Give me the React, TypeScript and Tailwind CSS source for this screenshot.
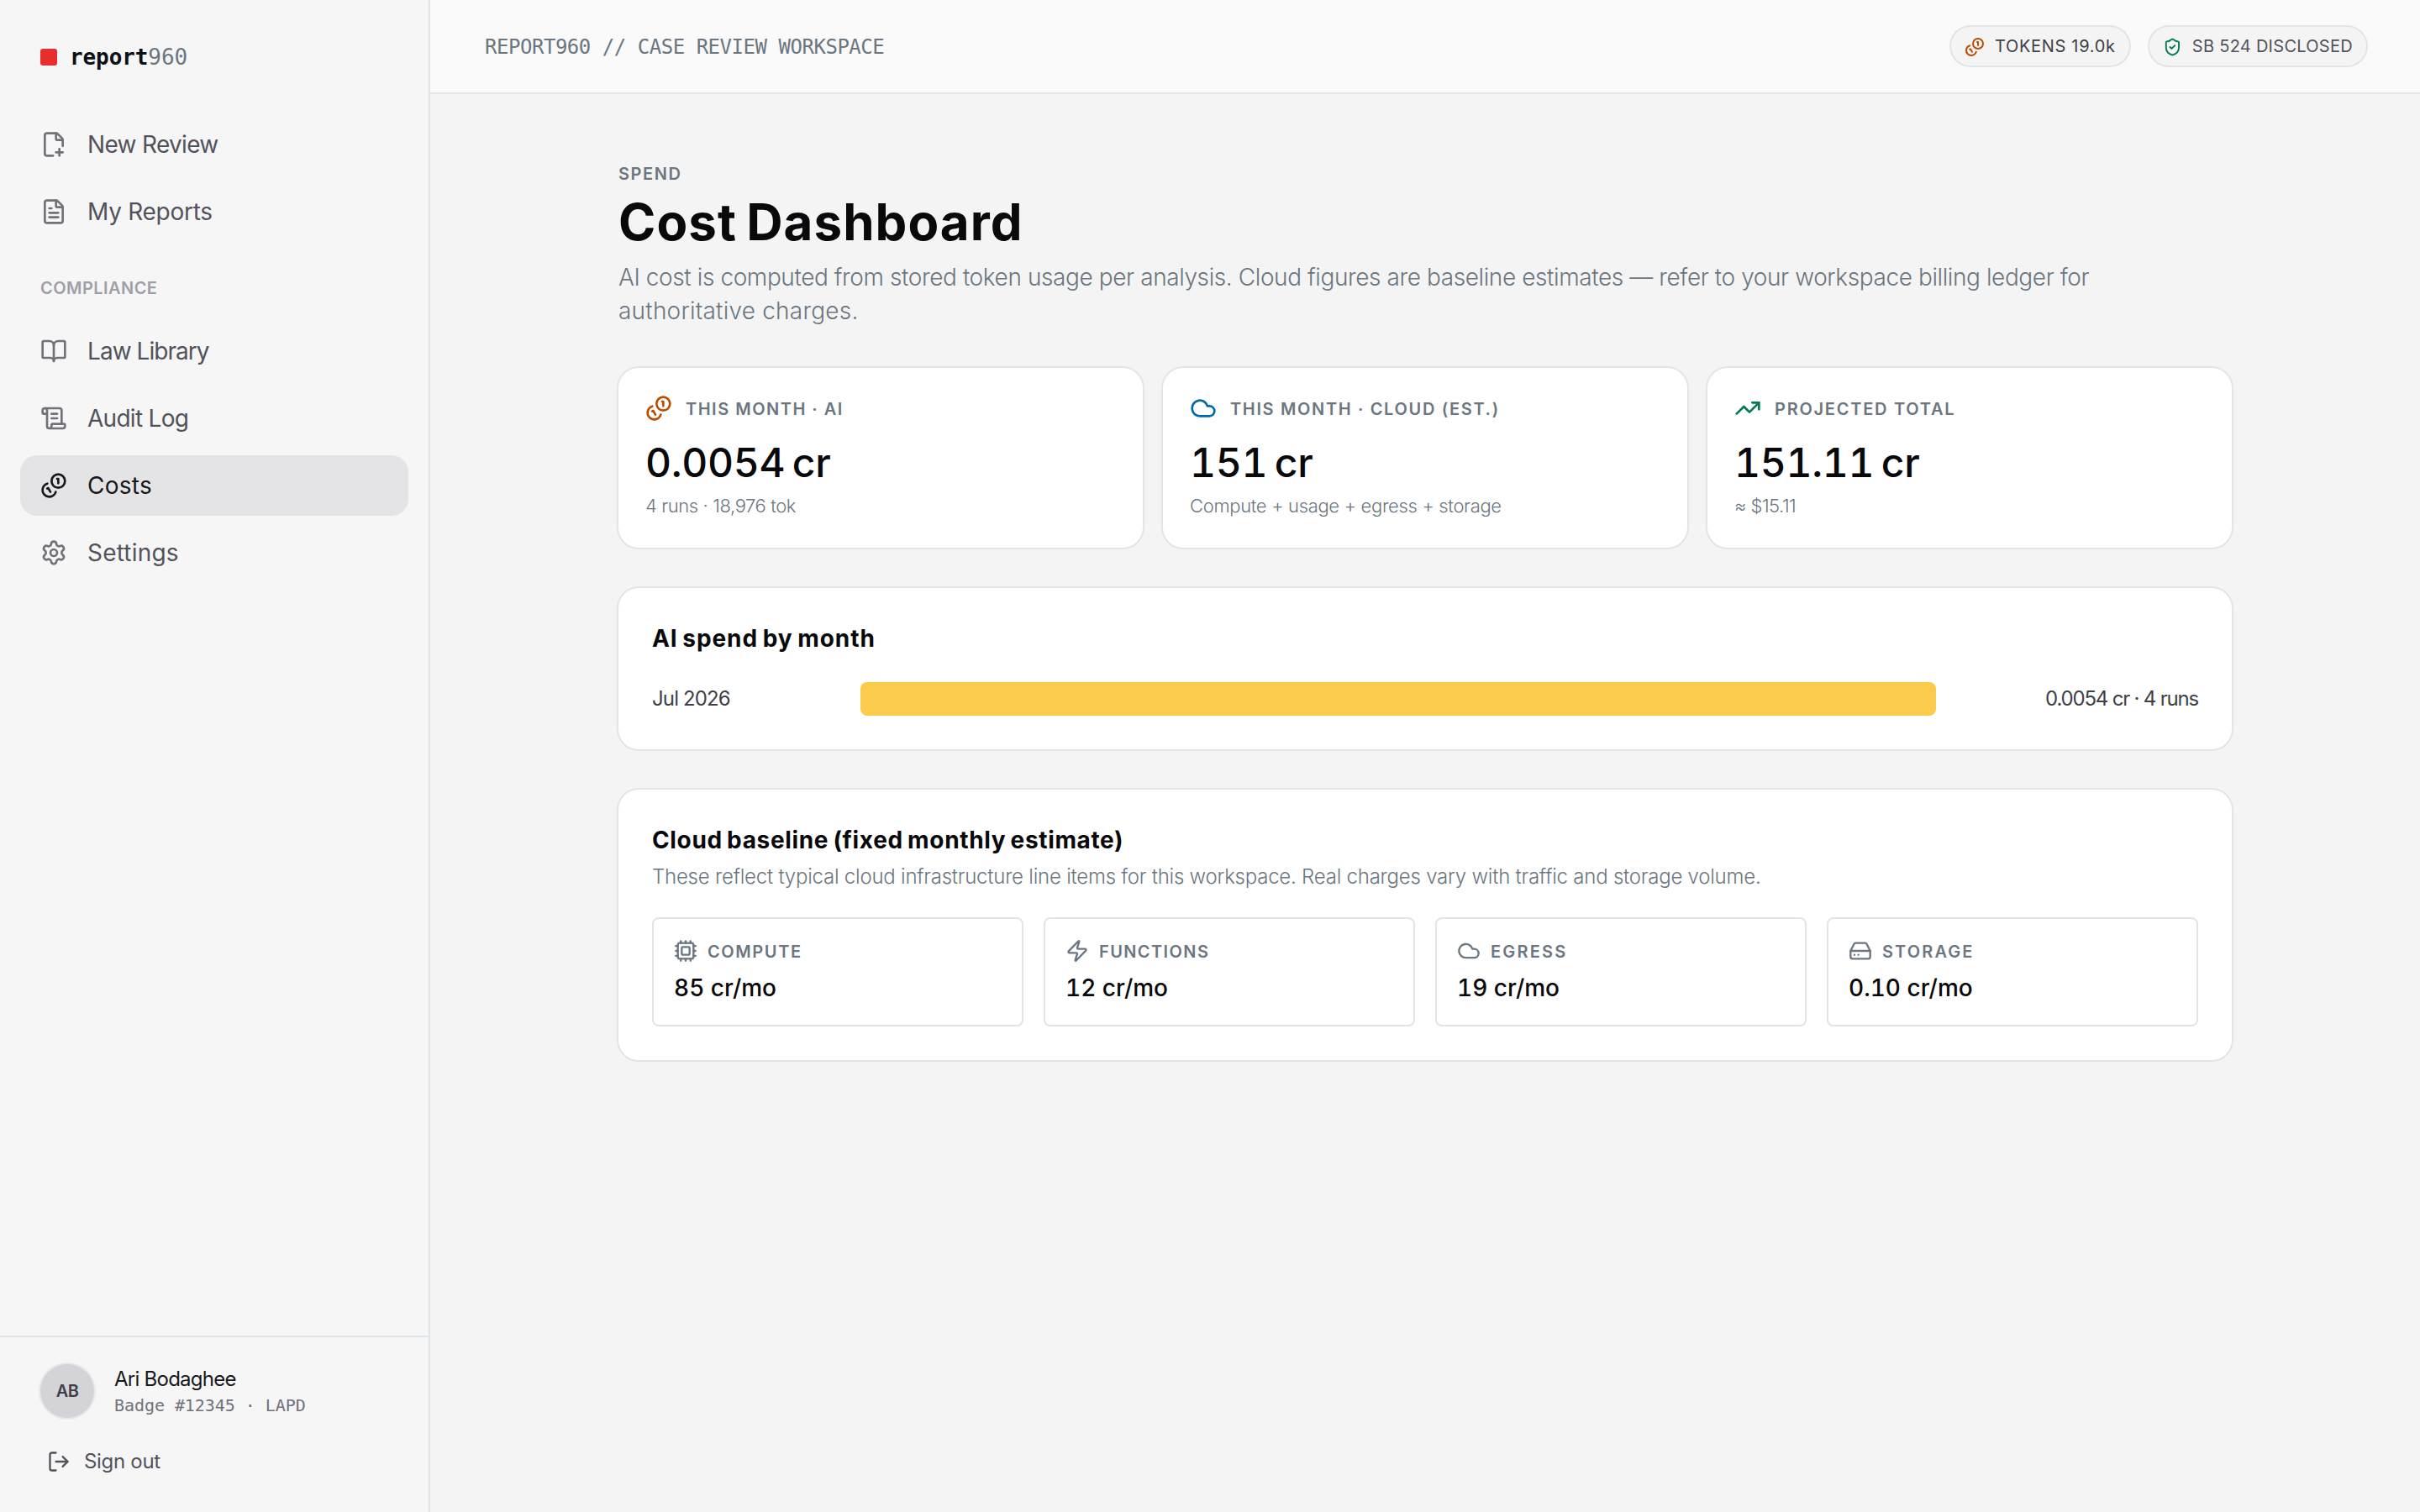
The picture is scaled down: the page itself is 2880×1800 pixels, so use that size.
import type { ComponentType } from "react";
import {
  BookOpen,
  Cloud,
  Cpu,
  FilePlusCorner,
  FileText,
  HardDrive,
  LogOut,
  ScrollText,
  Settings,
  ShieldCheck,
  TrendingUp,
  Zap,
} from "lucide-react";

type IconProps = { size?: number; className?: string };
type IconType = ComponentType<IconProps>;

function Coins({ size = 24, className }: IconProps) {
  return (
    <svg
      width={size}
      height={size}
      viewBox="0 0 24 24"
      fill="none"
      stroke="currentColor"
      strokeWidth={2}
      strokeLinecap="round"
      strokeLinejoin="round"
      className={className}
    >
      <path d="M13.744 17.736a6 6 0 1 1-7.48-7.48" />
      <path d="M15 6h1v4" />
      <path d="m6.134 14.768.866-.5 2 3.464" />
      <circle cx="16" cy="8" r="6" />
    </svg>
  );
}

type NavEntry = { label: string; icon: IconType; text: string; active?: boolean };

const mainNav: NavEntry[] = [
  { label: "New Review", icon: FilePlusCorner, text: "tracking-[-0.68px]" },
  { label: "My Reports", icon: FileText, text: "tracking-[-0.28px]" },
];

const complianceNav: NavEntry[] = [
  { label: "Law Library", icon: BookOpen, text: "tracking-[-0.95px]" },
  { label: "Audit Log", icon: ScrollText, text: "tracking-[-0.72px]" },
  { label: "Costs", icon: Coins, text: "tracking-[0.27px]", active: true },
  { label: "Settings", icon: Settings, text: "tracking-[0.2px]" },
];

const stats = [
  {
    label: "THIS MONTH · AI",
    labelText: "tracking-[1.5px]",
    value: "0.0054 cr",
    sub: "4 runs · 18,976 tok",
    subText: "tracking-[-0.4px]",
    icon: Coins,
    color: "text-amber-700",
  },
  {
    label: "THIS MONTH · CLOUD (EST.)",
    labelText: "tracking-[1.65px]",
    value: "151 cr",
    sub: "Compute + usage + egress + storage",
    subText: "tracking-[-0.33px]",
    icon: Cloud,
    color: "text-sky-700",
  },
  {
    label: "PROJECTED TOTAL",
    labelText: "tracking-[1.74px]",
    value: "151.11 cr",
    sub: "≈ $15.11",
    subText: "tracking-[-0.5px]",
    icon: TrendingUp,
    color: "text-emerald-700",
  },
];

const months = [{ month: "Jul 2026", cost: "0.0054 cr", runs: 4, share: 100 }];

const baseline = [
  { label: "COMPUTE", value: "85 cr/mo", icon: Cpu, text: "tracking-[1.6px]" },
  { label: "FUNCTIONS", value: "12 cr/mo", icon: Zap, text: "tracking-[1.4px]" },
  { label: "EGRESS", value: "19 cr/mo", icon: Cloud, text: "tracking-[2.2px]" },
  { label: "STORAGE", value: "0.10 cr/mo", icon: HardDrive, text: "tracking-[2.1px]" },
];

function NavItem({ item }: { item: NavEntry }) {
  const Icon = item.icon;
  return (
    <a
      className={
        item.active
          ? "flex h-18 items-center gap-6 rounded-[20px] bg-zinc-200 px-6 text-zinc-900"
          : "flex h-18 items-center gap-6 rounded-[20px] px-6 text-zinc-600"
      }
    >
      <Icon size={32} className={item.active ? "text-zinc-900" : "text-zinc-500"} />
      <span className={`text-[28px] ${item.text}`}>{item.label}</span>
    </a>
  );
}

function Sidebar() {
  return (
    <aside className="flex w-[512px] shrink-0 flex-col border-r-2 border-[#dfe5e9] bg-[#f6f6f6]">
      <div className="flex h-[136px] items-center gap-[15px] px-12">
        <span className="size-5 rounded-[3px] bg-[#e92c2c]" />
        <span className="font-['DejaVu_Sans_Mono',monospace] text-[26px] font-bold tracking-[-0.1px] text-[#0c1117]">
          report<span className="font-normal text-[#6b7680]">960</span>
        </span>
      </div>

      <nav className="flex flex-col gap-2 px-6">
        {mainNav.map((item) => (
          <NavItem key={item.label} item={item} />
        ))}
      </nav>
      <div className="flex h-[94px] items-center px-12 pt-4 text-[20px] font-semibold tracking-[0.45px] text-zinc-400">
        COMPLIANCE
      </div>
      <nav className="flex flex-col gap-2 px-6">
        {complianceNav.map((item) => (
          <NavItem key={item.label} item={item} />
        ))}
      </nav>

      {/* Signed-in officer */}
      <div className="mt-auto border-t-2 border-[#dfe5e9] px-12 py-8">
        <div className="flex items-center gap-6">
          <div className="flex size-16 items-center justify-center rounded-full bg-zinc-300 text-[20px] font-semibold tracking-[-0.5px] text-zinc-700 ring-2 ring-[#e8e8e8]">
            AB
          </div>
          <div>
            <p className="pt-0.5 text-[24px] leading-8 tracking-[-0.75px] text-zinc-900">Ari Bodaghee</p>
            <p className="font-['DejaVu_Sans_Mono',monospace] text-[20px] leading-[30px] tracking-[-0.06px] text-zinc-500">
              Badge #12345 · LAPD
            </p>
          </div>
        </div>
        <button className="mt-6 flex h-14 items-center gap-4 px-2 text-zinc-600">
          <LogOut size={28} />
          <span className="text-[24px] tracking-[-0.3px]">Sign out</span>
        </button>
      </div>
    </aside>
  );
}

function Topbar() {
  return (
    <header className="flex h-28 items-center justify-between border-b-2 border-[#dfe5e9] bg-[#fafafa] pr-16 pl-[65px]">
      <p className="mt-0.5 font-['DejaVu_Sans_Mono',monospace] text-[24px] tracking-[-0.47px] text-[#6b7680]">
        REPORT960 // CASE REVIEW WORKSPACE
      </p>
      <div className="flex gap-6 text-[20px]">
        <div className="flex h-[46px] w-[212px] items-center gap-3 rounded-full bg-[#f4f4f4] px-4 whitespace-nowrap text-zinc-700 ring-2 ring-[#dfe5e9]">
          <Coins size={24} className="mt-0.5 text-amber-700" />
          <span className="tracking-[0.68px]">TOKENS 19.0k</span>
        </div>
        <div className="flex h-[46px] w-[258px] items-center gap-3 rounded-full bg-[#f4f4f4] px-4 whitespace-nowrap text-zinc-600 ring-2 ring-[#dfe5e9]">
          <ShieldCheck size={24} className="mt-0.5 text-emerald-700" />
          <span className="tracking-[0.28px]">SB 524 DISCLOSED</span>
        </div>
      </div>
    </header>
  );
}

export default function App() {
  return (
    <div className="flex h-[1800px] w-[2880px] bg-[#f4f4f4] font-['Inter',sans-serif] text-[#09090b]">
      <Sidebar />
      <div className="flex flex-1 flex-col">
        <Topbar />
        <main className="mx-auto w-[1920px] pt-20">
          <p className="text-[20px] leading-[30px] font-semibold tracking-[1.57px] text-[#6b7680]">SPEND</p>
          <h1 className="mt-2 text-[60px] leading-[68px] font-bold tracking-[1.05px] [word-spacing:-4px]">
            Cost Dashboard
          </h1>
          <p className="mt-3 text-[28px] leading-10 font-[350] tracking-[-0.405px] text-[#6b7680]">
            AI cost is computed from stored token usage per analysis. Cloud figures are baseline estimates — refer to
            your workspace billing ledger for
            <br />
            <span className="tracking-[0.22px]">authoritative charges.</span>
          </p>

          <div className="mt-12 grid grid-cols-3 gap-6">
            {stats.map((s) => (
              <div key={s.label} className="h-[214px] rounded-3xl bg-white p-8 ring-2 ring-[#dfe5e9]">
                <div className="flex items-center gap-4">
                  <s.icon size={32} className={s.color} />
                  <span className={`mt-0.5 text-[20px] font-semibold text-[#6b7680] ${s.labelText}`}>{s.label}</span>
                </div>
                <p className="mt-5 text-[48px] leading-[57px] font-medium tracking-[-0.35px] tabular-nums [word-spacing:-4px]">
                  {s.value}
                </p>
                <p className={`mt-1.5 text-[22px] leading-[34px] font-[350] text-[#6b7680] ${s.subText}`}>{s.sub}</p>
              </div>
            ))}
          </div>

          <section className="mt-12 rounded-3xl bg-white p-10 ring-2 ring-[#dfe5e9]">
            <h2 className="text-[28px] leading-10 font-bold tracking-[0.95px] [word-spacing:-2px]">
              AI spend by month
            </h2>
            {months.map((m) => (
              <div
                key={m.month}
                className="mt-8 grid h-10 grid-cols-[224px_1280px_1fr] items-center gap-x-6 text-[24px] text-zinc-700"
              >
                <span className="tracking-[-0.88px]">{m.month}</span>
                <div className="h-10">
                  <div className="h-full rounded-lg bg-[#fdcb4b]" style={{ width: `${m.share}%` }} />
                </div>
                <span className="text-right tracking-[-1.2px]">
                  {m.cost} · {m.runs} runs
                </span>
              </div>
            ))}
          </section>

          <section className="mt-12 rounded-3xl bg-white p-10 ring-2 ring-[#dfe5e9]">
            <h2 className="text-[28px] leading-10 font-bold tracking-[0.65px] [word-spacing:-2px]">
              Cloud baseline (fixed monthly estimate)
            </h2>
            <p className="mt-[7px] text-[24px] leading-[33px] font-[350] tracking-[-0.228px] text-[#6b7680]">
              These reflect typical cloud infrastructure line items for this workspace. Real charges vary with traffic
              and storage volume.
            </p>
            <div className="mt-8 grid grid-cols-4 gap-6">
              {baseline.map((b) => (
                <div key={b.label} className="rounded-lg border-2 border-[#dfe5e9] p-6">
                  <div className="flex h-7 items-center gap-3 text-[#6b7680]">
                    <b.icon size={28} />
                    <span className={`mt-0.5 text-[20px] font-semibold ${b.text}`}>{b.label}</span>
                  </div>
                  <p className="mt-2.5 text-[28px] leading-10 font-medium tabular-nums">{b.value}</p>
                </div>
              ))}
            </div>
          </section>
        </main>
      </div>
    </div>
  );
}
